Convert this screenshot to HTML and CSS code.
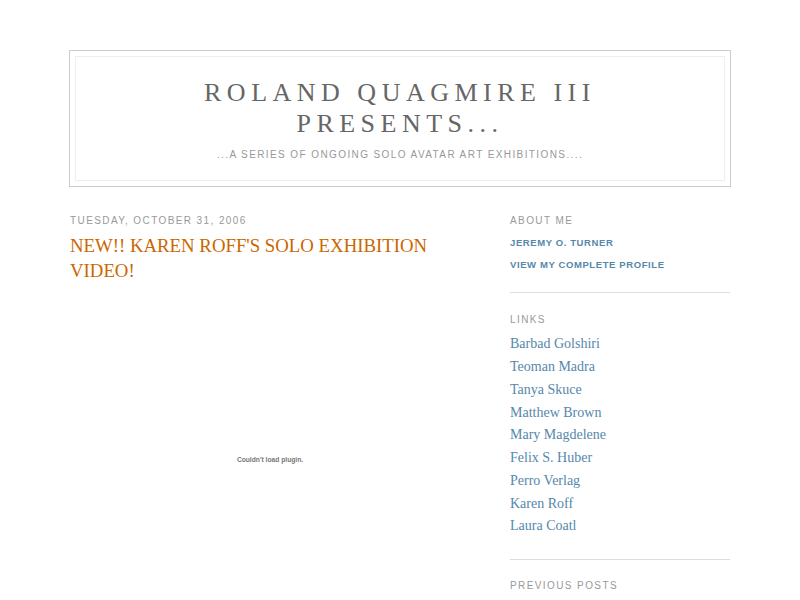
FILE: index.html
```html
<!DOCTYPE html>
<html>
<head>
<meta charset="utf-8">
<title>Roland Quagmire III Presents...</title>
<link rel="stylesheet" href="styles.css">
</head>
<body>
<div class="header">
  <h1 class="blog-title">Roland Quagmire III Presents...</h1>
  <p class="blog-description">...A Series of Ongoing Solo Avatar Art Exhibitions....</p>
</div>
<div class="content">
  <div class="main">
    <h2 class="date-header">Tuesday, October 31, 2006</h2>
    <div class="post">
      <h3 class="post-title">NEW!! KAREN ROFF'S SOLO EXHIBITION VIDEO!</h3>
      <div class="post-body">
        <div class="plugin"><span class="plugin-msg">Couldn't load plugin.</span></div>
      </div>
    </div>
  </div>
  <div class="sidebar">
    <div class="profile">
      <h2 class="side-title">About Me</h2>
      <div class="profile-name"><a href="#">Jeremy O. Turner</a></div>
      <div class="profile-link"><a href="#">View my complete profile</a></div>
    </div>
    <h2 class="side-title">Links</h2>
    <ul class="links">
      <li><a href="#">Barbad Golshiri</a></li>
      <li><a href="#">Teoman Madra</a></li>
      <li><a href="#">Tanya Skuce</a></li>
      <li><a href="#">Matthew Brown</a></li>
      <li><a href="#">Mary Magdelene</a></li>
      <li><a href="#">Felix S. Huber</a></li>
      <li><a href="#">Perro Verlag</a></li>
      <li><a href="#">Karen Roff</a></li>
      <li><a href="#">Laura Coatl</a></li>
    </ul>
    <h2 class="side-title">Previous Posts</h2>
  </div>
</div>
</body>
</html>
```

FILE: styles.css
```css
html, body {
  background: #fff;
}
body {
  margin: 0;
  padding: 50px 20px 0;
  font-family: "Liberation Serif", serif;
  font-size: 13px;
  color: #333;
}
a {
  color: #5588aa;
  text-decoration: none;
}
.header {
  width: 660px;
  margin: 0 auto 12px;
  border: 1px solid #ccc;
  text-align: center;
}
.blog-title {
  margin: 5px 5px 0;
  padding: 20px 20px 8.5px;
  border: 1px solid #eee;
  border-width: 1px 1px 0;
  font-size: 26px;
  line-height: 31.2px;
  font-weight: normal;
  color: #666;
  text-transform: uppercase;
  letter-spacing: 5.5px;
}
.blog-description {
  margin: 0 5px 5px;
  padding: 0 20px 18px;
  border: 1px solid #eee;
  border-width: 0 1px 1px;
  font: 10px/14.2px "Liberation Sans", Arial, sans-serif;
  text-transform: uppercase;
  letter-spacing: 1.4px;
  color: #999;
}
.content {
  width: 660px;
  margin: 0 auto;
  display: flex;
  justify-content: space-between;
  align-items: flex-start;
}
.main {
  width: 410px;
}
.sidebar {
  width: 220px;
}
.date-header,
.side-title {
  margin: 15.2px 0 7.6px;
  font: 10px/14.2px "Liberation Sans", Arial, sans-serif;
  text-transform: uppercase;
  letter-spacing: 1.4px;
  color: #999;
}
.date-header {
  margin-bottom: 4px;
}
.post {
  margin: 4px 0 19.5px;
  padding-bottom: 19.5px;
  border-bottom: 1px dotted #ccc;
}
.post-title {
  margin: 0;
  padding: 0 0 4px;
  font-size: 18.8px;
  font-weight: normal;
  line-height: 25.5px;
  color: #cc6600;
}
.post-body {
  margin: 0 0 10px;
  line-height: 1.6em;
}
.plugin {
  width: 400px;
  height: 344px;
  display: flex;
  align-items: center;
  justify-content: center;
}
.plugin-msg {
  font: bold 6.7px "Liberation Sans", Arial, sans-serif;
  color: #777;
}
.profile {
  margin: 0 0 19.5px;
  padding-bottom: 19.5px;
  border-bottom: 1px solid #ddd;
}
.profile-name,
.profile-link {
  font: bold 9.5px/14.2px "Liberation Sans", Arial, sans-serif;
  text-transform: uppercase;
  letter-spacing: 0.6px;
}
.profile-name {
  margin-bottom: 8px;
}
.links {
  margin: 0 0 19.5px;
  padding: 0 0 19.5px;
  border-bottom: 1px solid #ddd;
  list-style: none;
}
.links li {
  margin: 0;
  padding: 0 0 3.25px;
  font-size: 14px;
  line-height: 19.5px;
}
```
